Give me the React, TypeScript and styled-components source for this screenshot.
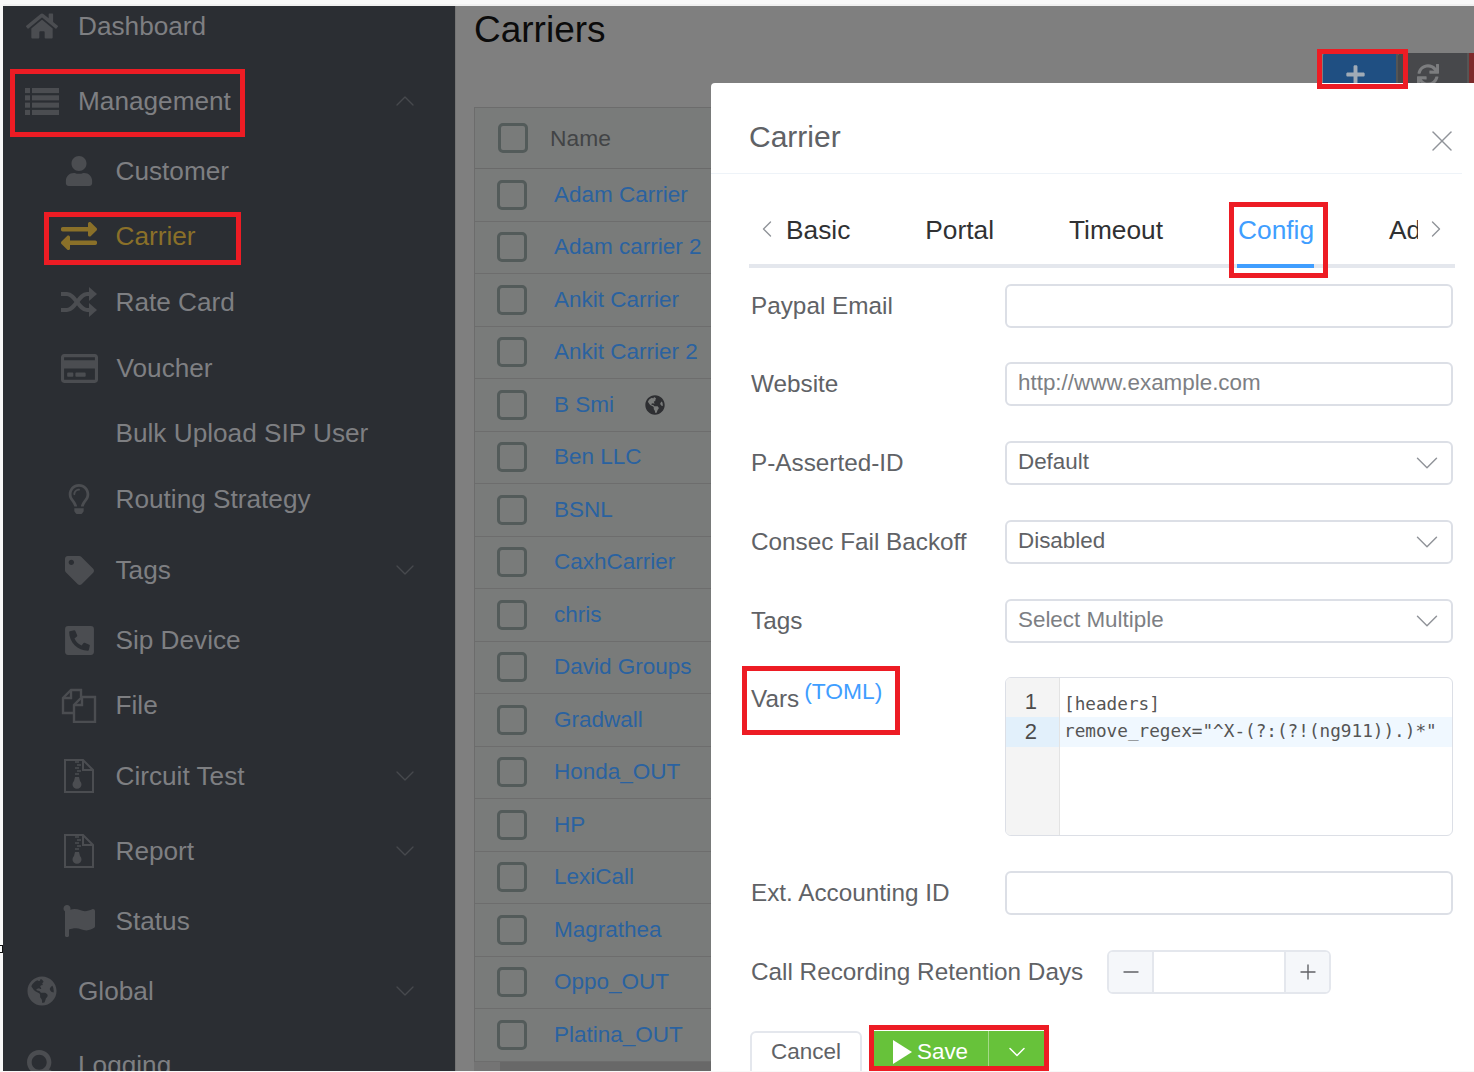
import { ReactNode } from "react";
import styled, { createGlobalStyle } from "styled-components";
import { ChevronDown, ChevronLeft, ChevronRight, ChevronUp, Minus, Plus, X } from "lucide-react";
import {
  FaExchangeAlt,
  FaFlag,
  FaGlobeAmericas,
  FaHome,
  FaPhoneSquareAlt,
  FaPlus,
  FaRegCreditCard,
  FaRegLightbulb,
  FaSearch,
  FaSync,
  FaTag,
  FaUser,
} from "react-icons/fa";

const GlobalStyle = createGlobalStyle`
  * {
    box-sizing: border-box;
  }
  html, body {
    margin: 0;
    padding: 0;
    background: #ffffff;
    font-family: "Liberation Sans", Arial, sans-serif;
  }
`;

const Page = styled.div`
  position: relative;
  width: 1474px;
  height: 1072px;
  overflow: hidden;
  padding: 4px 0 1px 3px;
  background: #f8f8f8;
`;
const Shell = styled.div`
  position: relative;
  display: flex;
  height: 1067px;
  overflow: hidden;
  border-top: 2px solid #f0f0f0;
`;

/* left menu */
const Sidebar = styled.nav`
  flex: 0 0 452px;
  background: #2b2e33;
`;
const NavRow = styled.div<{ $gap: number; $sub?: boolean; $active?: boolean }>`
  display: flex;
  align-items: center;
  height: 40px;
  margin-top: ${(p) => p.$gap}px;
  padding: 0 34px 0 ${(p) => (p.$sub ? 58 : 21)}px;
  gap: ${(p) => (p.$sub ? 18.5 : 18)}px;
  font-size: 26.2px;
  color: ${(p) => (p.$active ? "#8a7029" : "#7e7f82")};
`;
const NavIcon = styled.span<{ $active?: boolean }>`
  flex: 0 0 36px;
  display: flex;
  align-items: center;
  justify-content: center;
  color: ${(p) => (p.$active ? "#8a7029" : "#4b4d51")};
`;
const NavCaret = styled.span`
  display: flex;
  margin-left: auto;
  color: #47494d;
`;

/* page behind the dialog */
const Main = styled.main`
  flex: 1;
  min-width: 0;
  padding-left: 18px;
  background: #7f7f7f;
  border-left: 1px solid #747474;
`;
const Heading = styled.h1`
  margin: 0;
  height: 47px;
  font-size: 37px;
  font-weight: 400;
  line-height: 48px;
  color: #0b0b0b;
`;
const Toolbar = styled.div`
  display: flex;
  justify-content: flex-end;
  height: 54px;
`;
const ToolButton = styled.div<{ $bg: string; $width: number; $fg: string }>`
  display: flex;
  justify-content: center;
  padding: 11px 9px 0 0;
  width: ${(p) => p.$width}px;
  height: 40px;
  background: ${(p) => p.$bg};
  color: ${(p) => p.$fg};
  border-right: 2px solid #555555;
  border-top-left-radius: 3px;
`;
const DangerStub = styled.div`
  width: 5px;
  height: 40px;
  background: #7d2b2b;
`;
const CarrierTable = styled.div`
  border-top: 1px solid #6c6c6c;
  border-left: 1px solid #6c6c6c;
  background: #797b7a;
`;
const HeaderRow = styled.div`
  display: flex;
  align-items: center;
  height: 61px;
  padding-left: 23px;
  gap: 22px;
  font-size: 22.8px;
  color: #424446;
  border-bottom: 1px solid #6a6a6a;
`;
const TableRow = styled.div`
  display: flex;
  align-items: center;
  height: 52.5px;
  padding-left: 22px;
  gap: 27px;
  font-size: 22.5px;
  color: #2a62a0;
  border-bottom: 1px solid #6d6d6d;
`;
const RowGlobe = styled.span`
  display: flex;
  margin-left: 4px;
  color: #2e2f32;
`;
const CheckBox = styled.span`
  flex: 0 0 30px;
  height: 30px;
  border: 3px solid #535b5a;
  border-radius: 5px;
`;
const ScrollTrack = styled.div`
  display: flex;
  height: 9px;
  background: #747474;
`;
const ScrollThumb = styled.div`
  margin-left: 26px;
  flex: 1;
  background: #686868;
`;

/* dialog */
const Modal = styled.section`
  position: absolute;
  left: 708px;
  top: 77px;
  right: 0;
  bottom: -40px;
  background: #ffffff;
  border-top-left-radius: 4px;
`;
const ModalHeader = styled.header`
  display: flex;
  align-items: center;
  height: 91px;
  margin-right: 12px;
  padding: 18px 0 0 38px;
  border-bottom: 1px solid #eef3f8;
`;
const ModalTitle = styled.h2`
  margin: 0;
  font-size: 30px;
  font-weight: 400;
  color: #606266;
`;
const CloseButton = styled.span`
  display: flex;
  margin: 7px 2px 0 auto;
  color: #909399;
`;
const ModalBody = styled.div`
  padding: 0 19px 0 38px;
`;
const TabNav = styled.div`
  position: relative;
  margin-top: 29px;
  border-bottom: 4px solid #e4e7ed;
  height: 65px;
`;
const TabScroller = styled.div`
  display: flex;
  width: 669px;
  height: 65px;
  overflow: hidden;
  padding-left: 37px;
  gap: 75px;
`;
const Tab = styled.div<{ $active?: boolean }>`
  position: relative;
  flex: none;
  height: 65px;
  padding-top: 12px;
  font-size: 26.3px;
  line-height: 30px;
  color: ${(p) => (p.$active ? "#409eff" : "#303133")};
  &::after {
    content: "";
    display: ${(p) => (p.$active ? "block" : "none")};
    position: absolute;
    left: -1px;
    right: 0;
    bottom: 0;
    height: 4px;
    background: #409eff;
  }
`;
const TabArrow = styled.span<{ $side: "left" | "right" }>`
  position: absolute;
  top: 12px;
  ${(p) => (p.$side === "left" ? "left: 4px;" : "right: 5px;")}
  display: flex;
  color: #909399;
`;
const Form = styled.form`
  margin-top: 15.5px;
  padding: 0 2px;
`;
const FormRow = styled.div<{ $height?: number; $after?: number }>`
  display: flex;
  align-items: flex-start;
  height: ${(p) => p.$height ?? 43.75}px;
  margin-bottom: ${(p) => p.$after ?? 35}px;
`;
const FieldLabel = styled.label<{ $width?: number }>`
  flex: 0 0 ${(p) => p.$width ?? 254}px;
  font-size: 24.3px;
  line-height: 44px;
  color: #606266;
`;
const TomlLink = styled.span`
  position: relative;
  top: -8px;
  margin-left: 5px;
  font-size: 22.8px;
  color: #409eff;
`;
const TextField = styled.input`
  flex: 1;
  min-width: 0;
  height: 44px;
  padding: 0 11px 2px;
  font: 22.4px "Liberation Sans", Arial, sans-serif;
  color: #606266;
  background: #ffffff;
  border: 2px solid #dcdfe6;
  border-radius: 6px;
  outline: none;
  &::placeholder {
    color: #7d7f84;
  }
`;
const SelectField = styled.div<{ $placeholder?: boolean }>`
  flex: 1;
  display: flex;
  align-items: center;
  justify-content: space-between;
  height: 44px;
  padding: 0 5px 2px 11px;
  font-size: 22.4px;
  color: ${(p) => (p.$placeholder ? "#7d7f84" : "#606266")};
  border: 2px solid #dcdfe6;
  border-radius: 6px;
`;
const SelectCaret = styled.span`
  display: flex;
  margin-bottom: -2px;
  color: #909399;
`;
const Editor = styled.div`
  flex: 1;
  display: flex;
  height: 159px;
  overflow: hidden;
  border: 1px solid #dcdfe6;
  border-radius: 6px;
`;
const Gutter = styled.div`
  flex: 0 0 54px;
  padding-top: 9px;
  background: #f4f4f4;
  border-right: 1px solid #e3e3e3;
`;
const GutterLine = styled.div<{ $current?: boolean }>`
  height: 30px;
  padding-right: 22px;
  text-align: right;
  font-size: 22px;
  line-height: 30px;
  color: #4b4b4b;
  background: ${(p) => (p.$current ? "#e2f0fb" : "transparent")};
`;
const CodeArea = styled.div`
  flex: 1;
  padding-top: 9px;
`;
const CodeLine = styled.div<{ $current?: boolean }>`
  height: 30px;
  padding: ${(p) => (p.$current ? 0 : 3)}px 0 0 4px;
  font: 17.7px/28px "DejaVu Sans Mono", "Liberation Mono", monospace;
  white-space: pre;
  color: #555555;
  background: ${(p) => (p.$current ? "#f0f8ff" : "transparent")};
`;
const Stepper = styled.div`
  display: flex;
  width: 224px;
  height: 44px;
  overflow: hidden;
  border: 2px solid #e4e7ed;
  border-radius: 6px;
`;
const StepButton = styled.span<{ $side: "left" | "right" }>`
  flex: 0 0 45px;
  display: flex;
  align-items: center;
  justify-content: center;
  color: #606266;
  background: #f5f7fa;
  ${(p) => (p.$side === "left" ? "border-right" : "border-left")}: 2px solid #e4e7ed;
`;
const StepValue = styled.span`
  flex: 1;
`;
const Actions = styled.div`
  display: flex;
  gap: 12px;
  margin-top: 37px;
  margin-left: -1px;
`;
const CancelButton = styled.div`
  width: 112px;
  height: 50px;
  text-align: center;
  padding-top: 4px;
  font-size: 22.5px;
  line-height: 30px;
  color: #606266;
  border: 2px solid #e4e7ed;
  border-radius: 6px;
`;
const SaveGroup = styled.div`
  display: flex;
  width: 170px;
  height: 50px;
  font-size: 22.4px;
  color: #ffffff;
  background: #67c23a;
`;
const SavePart = styled.div`
  flex: 0 0 115px;
  display: flex;
  align-items: flex-start;
  gap: 5px;
  padding: 9px 0 0 19px;
  line-height: 24px;
  border-right: 1px solid #a4da88;
`;
const SaveCaret = styled.div`
  flex: 1;
  display: flex;
  justify-content: center;
  padding-top: 7px;
`;

/* red marks someone drew over the screenshot */
const Callout = styled.div<{ $x: number; $y: number; $w: number; $h: number }>`
  position: absolute;
  left: ${(p) => p.$x}px;
  top: ${(p) => p.$y}px;
  width: ${(p) => p.$w}px;
  height: ${(p) => p.$h}px;
  border: 5px solid #ed1c24;
  pointer-events: none;
`;
const EdgeMark = styled.div`
  position: absolute;
  left: -1px;
  top: 945px;
  width: 4px;
  height: 8px;
  border: 1px solid #111111;
`;

function ListIcon() {
  const rows = [0, 7.3, 14.6, 21.9];
  return (
    <svg width="34" height="27" viewBox="0 0 34 27" fill="currentColor">
      {rows.map((y) => (
        <g key={y}>
          <rect x="0" y={y} width="5" height="5.1" />
          <rect x="7" y={y} width="27" height="5.1" />
        </g>
      ))}
    </svg>
  );
}

function ShuffleIcon() {
  return (
    <svg width="36" height="30" viewBox="0 0 36 30" fill="none" stroke="currentColor" strokeWidth="4">
      <path d="M0 7h6c8 0 12 16 20 16h3" />
      <path d="M0 23h6c8 0 12-16 20-16h3" />
      <path d="M28 0l8 7-8 7z" fill="currentColor" stroke="none" />
      <path d="M28 16l8 7-8 7z" fill="currentColor" stroke="none" />
    </svg>
  );
}

function FilesIcon() {
  return (
    <svg width="36" height="36" viewBox="0 0 36 36" fill="none" stroke="currentColor" strokeWidth="2.4">
      <path d="M12 26H2V11l8-8h10v7" />
      <path d="M10 3v8H2" />
      <path d="M13 35V18l8-8h13v25z" />
      <path d="M21 10v8h-8" />
    </svg>
  );
}

function ZipFileIcon() {
  return (
    <svg width="30" height="34" viewBox="0 0 30 34" fill="none" stroke="currentColor" strokeWidth="2">
      <path d="M1 1h18l10 10v22H1z" />
      <path d="M19 1v10h10" />
      <path d="M11 3h4M13 6h4M11 9h4M13 12h4M11 15h4" strokeWidth="1.6" />
      <path d="M11 18h4l1 4a4.5 4.5 0 1 1-6 0z" fill="currentColor" stroke="none" />
    </svg>
  );
}

type NavItem = {
  label: string;
  gap: number;
  icon?: ReactNode;
  sub?: boolean;
  active?: boolean;
  caret?: "up" | "down";
};

const navItems: NavItem[] = [
  { label: "Dashboard", gap: 0, icon: <FaHome size={32} /> },
  { label: "Management", gap: 35, icon: <ListIcon />, caret: "up" },
  { label: "Customer", gap: 30, icon: <FaUser size={30} />, sub: true },
  { label: "Carrier", gap: 25, icon: <FaExchangeAlt size={36} />, sub: true, active: true },
  { label: "Rate Card", gap: 26, icon: <ShuffleIcon />, sub: true },
  { label: "Voucher", gap: 26, icon: <FaRegCreditCard size={37} />, sub: true },
  { label: "Bulk Upload SIP User", gap: 25, sub: true },
  { label: "Routing Strategy", gap: 26, icon: <FaRegLightbulb size={30} />, sub: true },
  { label: "Tags", gap: 31, icon: <FaTag size={29} />, sub: true, caret: "down" },
  { label: "Sip Device", gap: 30, icon: <FaPhoneSquareAlt size={33} />, sub: true },
  { label: "File", gap: 25, icon: <FilesIcon />, sub: true },
  { label: "Circuit Test", gap: 31, icon: <ZipFileIcon />, sub: true, caret: "down" },
  { label: "Report", gap: 35, icon: <ZipFileIcon />, sub: true, caret: "down" },
  { label: "Status", gap: 30, icon: <FaFlag size={32} />, sub: true },
  { label: "Global", gap: 30, icon: <FaGlobeAmericas size={30} />, caret: "down" },
  { label: "Logging", gap: 34, icon: <FaSearch size={30} /> },
];

const carriers = [
  "Adam Carrier",
  "Adam carrier 2",
  "Ankit Carrier",
  "Ankit Carrier 2",
  "B Smi",
  "Ben LLC",
  "BSNL",
  "CaxhCarrier",
  "chris",
  "David Groups",
  "Gradwall",
  "Honda_OUT",
  "HP",
  "LexiCall",
  "Magrathea",
  "Oppo_OUT",
  "Platina_OUT",
];

const tabs = ["Basic", "Portal", "Timeout", "Config", "Advanced"];

function SelectRow({ label, value, placeholder }: { label: string; value: string; placeholder?: boolean }) {
  return (
    <FormRow>
      <FieldLabel>{label}</FieldLabel>
      <SelectField $placeholder={placeholder}>
        {value}
        <SelectCaret>
          <ChevronDown size={38} strokeWidth={0.9} />
        </SelectCaret>
      </SelectField>
    </FormRow>
  );
}

export default function App() {
  return (
    <Page>
      <GlobalStyle />
      <Shell>
        <Sidebar>
          {navItems.map((item) => (
            <NavRow key={item.label} $gap={item.gap} $sub={item.sub} $active={item.active}>
              <NavIcon $active={item.active}>{item.icon}</NavIcon>
              {item.label}
              {item.caret && (
                <NavCaret>
                  {item.caret === "up" ? (
                    <ChevronUp size={32} strokeWidth={1} />
                  ) : (
                    <ChevronDown size={32} strokeWidth={1} />
                  )}
                </NavCaret>
              )}
            </NavRow>
          ))}
        </Sidebar>

        <Main>
          <Heading>Carriers</Heading>
          <Toolbar>
            <ToolButton $bg="#1f4f82" $width={75} $fg="#a0abb6">
              <FaPlus size={21} />
            </ToolButton>
            <ToolButton $bg="#47484b" $width={71} $fg="#7c7d7f">
              <FaSync size={22} />
            </ToolButton>
            <DangerStub />
          </Toolbar>
          <CarrierTable>
            <HeaderRow>
              <CheckBox />
              Name
            </HeaderRow>
            {carriers.map((name) => (
              <TableRow key={name}>
                <CheckBox />
                {name}
                {name === "B Smi" && (
                  <RowGlobe>
                    <FaGlobeAmericas size={20} />
                  </RowGlobe>
                )}
              </TableRow>
            ))}
          </CarrierTable>
          <ScrollTrack>
            <ScrollThumb />
          </ScrollTrack>
        </Main>

        <Modal>
          <ModalHeader>
            <ModalTitle>Carrier</ModalTitle>
            <CloseButton>
              <X size={36} strokeWidth={1} />
            </CloseButton>
          </ModalHeader>
          <ModalBody>
            <TabNav>
              <TabScroller>
                {tabs.map((tab) => (
                  <Tab key={tab} $active={tab === "Config"}>
                    {tab}
                  </Tab>
                ))}
              </TabScroller>
              <TabArrow $side="left">
                <ChevronLeft size={28} strokeWidth={1.2} />
              </TabArrow>
              <TabArrow $side="right">
                <ChevronRight size={28} strokeWidth={1.2} />
              </TabArrow>
            </TabNav>
            <Form>
              <FormRow>
                <FieldLabel>Paypal Email</FieldLabel>
                <TextField readOnly />
              </FormRow>
              <FormRow>
                <FieldLabel>Website</FieldLabel>
                <TextField readOnly placeholder="http://www.example.com" />
              </FormRow>
              <SelectRow label="P-Asserted-ID" value="Default" />
              <SelectRow label="Consec Fail Backoff" value="Disabled" />
              <SelectRow label="Tags" value="Select Multiple" placeholder />
              <FormRow $height={159} $after={35}>
                <FieldLabel>
                  Vars<TomlLink>(TOML)</TomlLink>
                </FieldLabel>
                <Editor>
                  <Gutter>
                    <GutterLine>1</GutterLine>
                    <GutterLine $current>2</GutterLine>
                  </Gutter>
                  <CodeArea>
                    <CodeLine>[headers]</CodeLine>
                    <CodeLine $current>{'remove_regex="^X-(?:(?!(ng911)).)*"'}</CodeLine>
                  </CodeArea>
                </Editor>
              </FormRow>
              <FormRow>
                <FieldLabel>Ext. Accounting ID</FieldLabel>
                <TextField readOnly />
              </FormRow>
              <FormRow $after={0}>
                <FieldLabel $width={356}>Call Recording Retention Days</FieldLabel>
                <Stepper>
                  <StepButton $side="left">
                    <Minus size={24} strokeWidth={1.4} />
                  </StepButton>
                  <StepValue />
                  <StepButton $side="right">
                    <Plus size={24} strokeWidth={1.4} />
                  </StepButton>
                </Stepper>
              </FormRow>
              <Actions>
                <CancelButton>Cancel</CancelButton>
                <SaveGroup>
                  <SavePart>
                    <svg width="19" height="24" viewBox="0 0 19 24">
                      <polygon points="0,0 19,12 0,24" fill="#ffffff" />
                    </svg>
                    Save
                  </SavePart>
                  <SaveCaret>
                    <ChevronDown size={28} strokeWidth={1.3} />
                  </SaveCaret>
                </SaveGroup>
              </Actions>
            </Form>
          </ModalBody>
        </Modal>
      </Shell>

      <EdgeMark />
      <Callout $x={10} $y={69} $w={235} $h={68} />
      <Callout $x={44} $y={212} $w={197} $h={53} />
      <Callout $x={1317} $y={49} $w={91} $h={40} />
      <Callout $x={1229} $y={202} $w={99} $h={76} />
      <Callout $x={742} $y={666} $w={158} $h={69} />
      <Callout $x={869} $y={1025} $w={180} $h={46} />
    </Page>
  );
}
